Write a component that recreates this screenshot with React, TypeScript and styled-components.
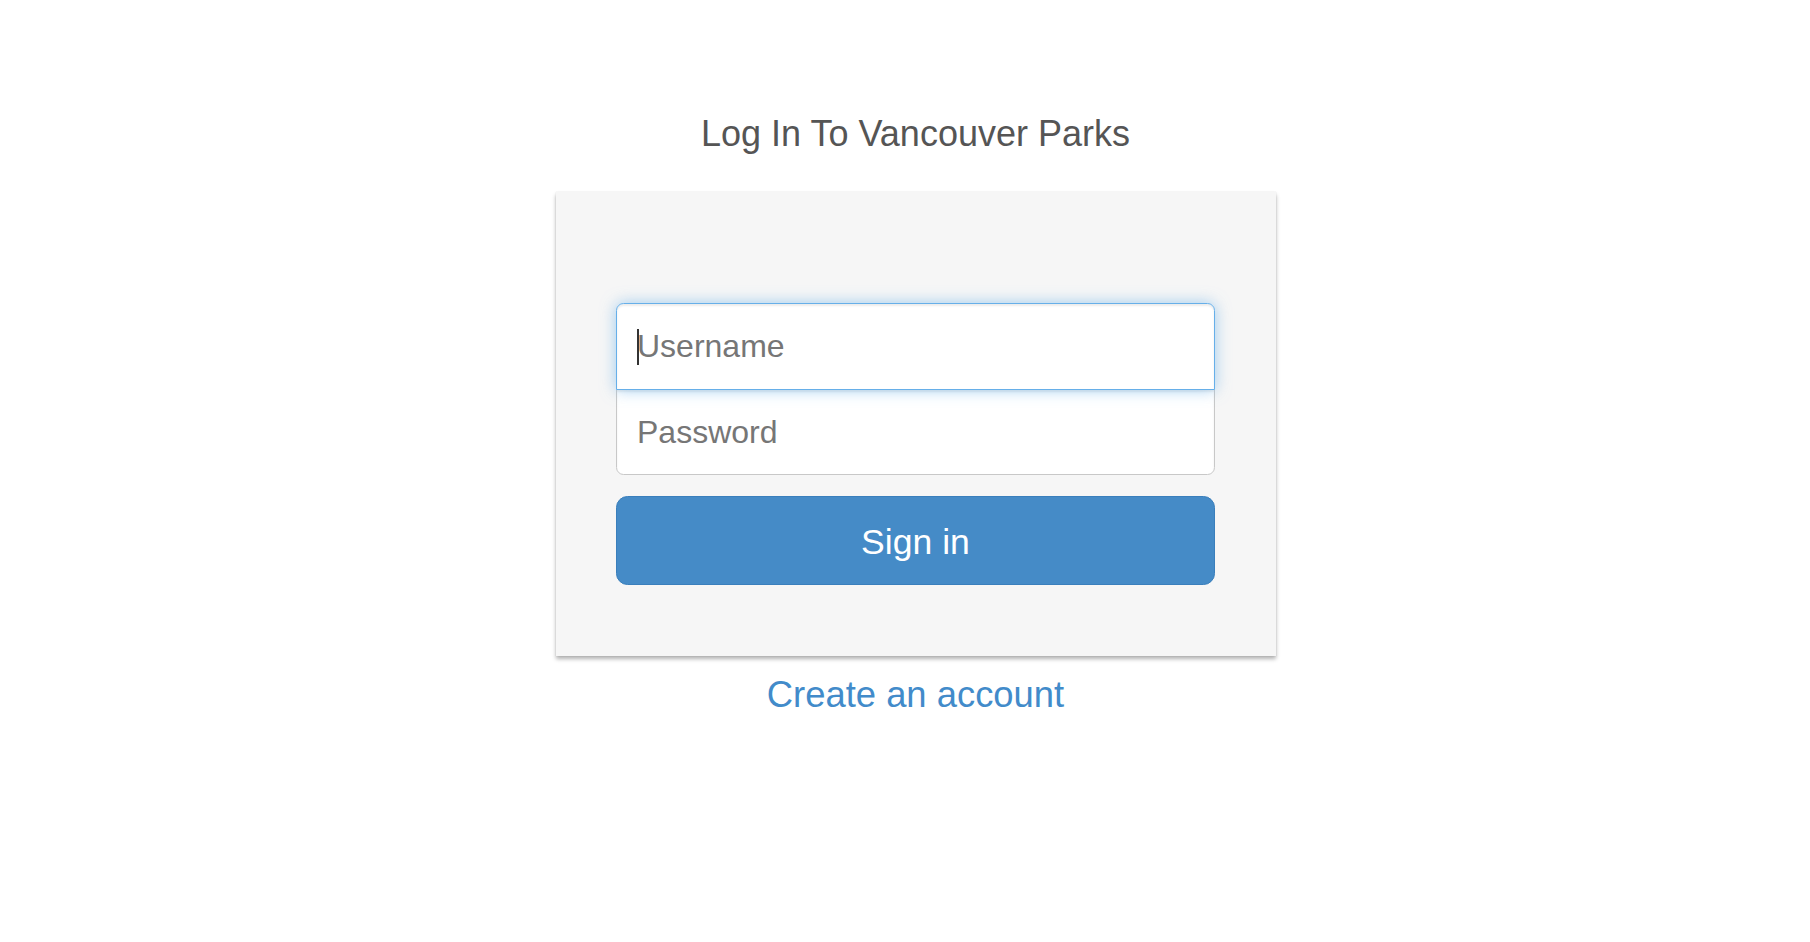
import React from "react";
import styled, { createGlobalStyle } from "styled-components";

const GlobalStyle = createGlobalStyle`
  html, body {
    margin: 0;
    padding: 0;
    background: #ffffff;
    font-family: "Liberation Sans", Arial, Helvetica, sans-serif;
  }
  * { box-sizing: border-box; }
`;

const Page = styled.main`
  display: flex;
  flex-direction: column;
  align-items: center;
  padding: 114px 0 0 21px;
  min-height: 942px;
`;

const Title = styled.h1`
  margin: 0 0 38px;
  font-size: 36px;
  line-height: 40px;
  font-weight: 400;
  color: #555555;
`;

const Card = styled.form`
  width: 720px;
  display: flex;
  flex-direction: column;
  padding: 111px 60.5px 71px;
  background: #f6f6f6;
  box-shadow: 0 3px 4px rgba(0, 0, 0, 0.3), 0 0 1px rgba(0, 0, 0, 0.14);
`;

const Field = styled.div`
  position: relative;
  display: flex;
`;

const Input = styled.input<{ $first?: boolean; $focused?: boolean }>`
  width: 100%;
  height: ${(p) => (p.$first ? "87px" : "86px")};
  margin-bottom: ${(p) => (p.$first ? "-1px" : "21px")};
  padding: 0 20px;
  font-family: "Liberation Sans", Arial, Helvetica, sans-serif;
  font-size: 32px;
  color: #555;
  background: #ffffff;
  border: 1px solid ${(p) => (p.$focused ? "#66afe9" : "#c8c8c8")};
  border-radius: ${(p) => (p.$first ? "7.5px 7.5px 0 0" : "0 0 7.5px 7.5px")};
  position: relative;
  z-index: ${(p) => (p.$focused ? 2 : 1)};
  outline: none;
  box-shadow: ${(p) =>
    p.$focused
      ? "inset 0 2px 2px rgba(0,0,0,0.075), 0 0 15px rgba(102,175,233,0.6)"
      : "inset 0 2px 2px rgba(0,0,0,0.075)"};
  caret-color: transparent;

  &::placeholder {
    color: #767676;
    opacity: 1;
  }
`;

const Caret = styled.span`
  position: absolute;
  left: 21px;
  top: 26px;
  width: 2px;
  height: 36px;
  background: #333333;
  z-index: 3;
`;

const SubmitButton = styled.button`
  height: 89px;
  width: 100%;
  padding: 3px 0 0;
  font-family: "Liberation Sans", Arial, Helvetica, sans-serif;
  font-size: 35.6px;
  color: #ffffff;
  background: #458bc7;
  border: 1px solid #3a7fbc;
  border-radius: 11.5px;
  cursor: pointer;
`;

const CreateLink = styled.a`
  margin-top: 19px;
  font-size: 36.4px;
  line-height: 40px;
  color: #428bca;
  text-decoration: none;
`;

export default function App() {
  return (
    <>
      <GlobalStyle />
      <Page>
        <Title>Log In To Vancouver Parks</Title>
        <Card onSubmit={(e) => e.preventDefault()}>
          <Field>
            <Input $first $focused type="text" placeholder="Username" />
            <Caret />
          </Field>
          <Field>
            <Input type="password" placeholder="Password" />
          </Field>
          <SubmitButton type="submit">Sign in</SubmitButton>
        </Card>
        <CreateLink href="#">Create an account</CreateLink>
      </Page>
    </>
  );
}
